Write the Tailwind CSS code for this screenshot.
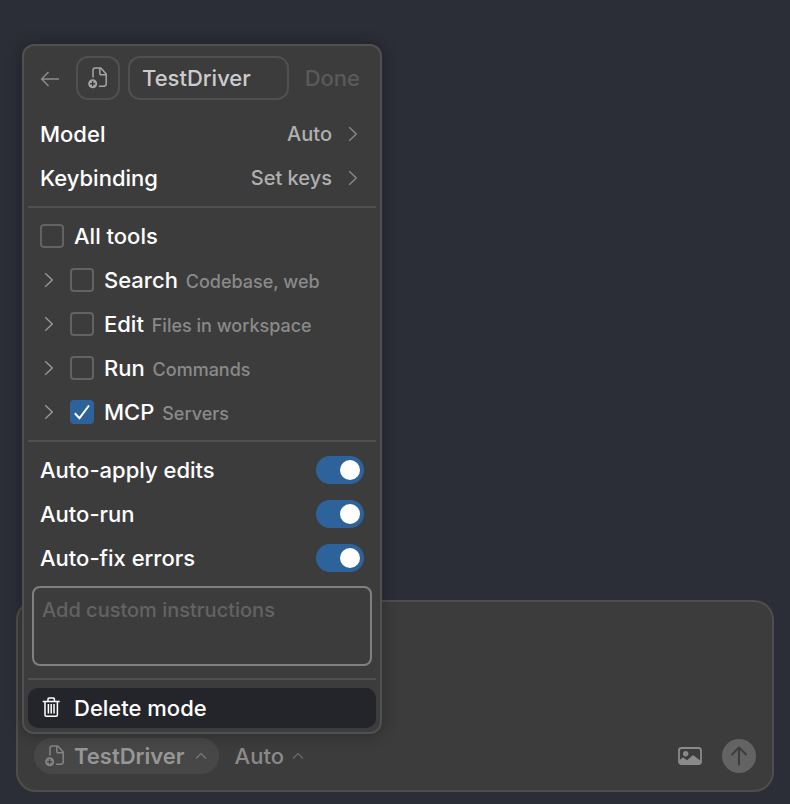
<!DOCTYPE html>
<html lang="en">
<head>
<meta charset="utf-8">
<meta name="viewport" content="width=device-width, initial-scale=1">
<title>Custom mode</title>
<script src="https://cdn.jsdelivr.net/npm/@tailwindcss/browser@4"></script>
</head>
<body class="bg-[#2b2e37] font-[Inter,'Liberation_Sans',sans-serif] text-[22px] leading-7 font-medium text-white">
<svg class="hidden" aria-hidden="true">
  <symbol id="file-plus" viewBox="0 0 22 22">
    <path d="M6 10V3.200A2.200 2.200 0 0 1 8.200 1h5.600l5.400 6v10a2.200 2.200 0 0 1-2.200 2.200h-4.500M12.800 1.200v5.300a1.200 1.200 0 0 0 1.200 1.200h5" fill="none" stroke="currentColor" stroke-width="1.500" stroke-linejoin="round" stroke-linecap="round"/>
    <path fill-rule="evenodd" d="M5.700 12.200a4.500 4.500 0 1 0 0 9a4.500 4.500 0 0 0 0-9ZM5 14.100h1.400v1.900h1.900v1.400h-1.900v1.900h-1.400v-1.900h-1.900v-1.400h1.900Z" fill="currentColor"/>
  </symbol>
  <symbol id="chevron-right" viewBox="0 0 10 16">
    <path d="M1.200 1.300 8.300 8l-7.100 6.700" fill="none" stroke="currentColor" stroke-width="1.300"/>
  </symbol>
  <symbol id="chevron-up" viewBox="0 0 12 8">
    <path d="M1 6.500l5-5 5 5" fill="none" stroke="currentColor" stroke-width="1.200"/>
  </symbol>
  <symbol id="check" viewBox="0 0 24 24">
    <path d="M4.800 13.200l4.700 5L19 5.500" fill="none" stroke="currentColor" stroke-width="2"/>
  </symbol>
</svg>

<main class="flex min-h-screen flex-col justify-end px-4 pb-3">
  <section class="relative flex min-h-48 flex-col justify-end rounded-[20px] border-2 border-[#4e4e4e] bg-[#3c3c3c] p-4" aria-label="Message composer">
    <div class="flex items-center">
      <button type="button" class="flex h-9 items-center rounded-full bg-[#474747] pr-3 pl-2.5 font-semibold text-[#969696]">
        <svg class="size-[22px] text-[#858585]"><use href="#file-plus"/></svg>
        <span class="ml-2">TestDriver</span>
        <svg class="ml-2.5 h-2 w-3 text-[#7a7a7a]"><use href="#chevron-up"/></svg>
      </button>
      <button type="button" class="ml-4 flex h-9 items-center text-[#8a8a8a]">
        <span>Auto</span>
        <svg class="ml-2 h-2 w-3 text-[#6c6c6c]"><use href="#chevron-up"/></svg>
      </button>
      <button type="button" class="ml-auto" aria-label="Add image">
        <svg class="h-5 w-6 text-[#8a8a8a]" viewBox="0 0 24 20">
          <rect x="1" y="2" width="22" height="16" rx="2.500" fill="none" stroke="currentColor" stroke-width="1.800"/>
          <circle cx="7.700" cy="7.700" r="2.700" fill="currentColor"/>
          <path d="M1 14.500l4-3.200 4 3 6-5.300 8 6v1.500a2 2 0 0 1-2 2H3a2 2 0 0 1-2-2Z" fill="currentColor"/>
        </svg>
      </button>
      <button type="button" class="ml-5 grid size-[34px] place-items-center rounded-full bg-[#636363] text-[#3c3c3c]" aria-label="Send">
        <svg class="size-5" viewBox="0 0 20 20" fill="none" stroke="currentColor" stroke-width="2" stroke-linecap="round" stroke-linejoin="round"><path d="M10 18.500V2M3 8.500L10 1.500l7 7"/></svg>
      </button>
    </div>

    <form class="absolute bottom-14 left-1 flex w-[360px] flex-col rounded-xl border-2 border-[#505050] bg-[#3c3c3c] px-1 pt-2.5 pb-1 shadow-[0_0_16px_rgba(0,0,0,0.3)]" aria-label="Edit mode">
      <div class="flex h-11 items-center pr-4 pl-3">
        <button type="button" aria-label="Back" class="text-[#8c8c8c]">
          <svg class="h-[18px] w-5" viewBox="0 0 20 18" fill="none" stroke="currentColor" stroke-width="1.500"><path d="M19 10H2M8.500 3L1.700 10l6.800 7"/></svg>
        </button>
        <button type="button" aria-label="Choose icon" class="ml-4 grid size-11 shrink-0 place-items-center rounded-xl border-2 border-[#505050] text-[#a6a6a6]">
          <svg class="size-[22px]"><use href="#file-plus"/></svg>
        </button>
        <input type="text" value="TestDriver" aria-label="Mode name" class="ml-2 h-11 w-0 grow rounded-xl border-2 border-[#505050] px-3 text-[#cccccc] outline-none">
        <button type="button" class="ml-4 text-[#5a5a5a]">Done</button>
      </div>

      <div class="mt-3">
        <button type="button" class="flex h-11 w-full items-center pr-[18px] pl-3">
          <span>Model</span><span class="ml-auto text-xl text-[#b0b0b0]">Auto</span>
          <svg class="ml-4 h-4 w-2.5 text-[#8c8c8c]"><use href="#chevron-right"/></svg>
        </button>
        <button type="button" class="flex h-11 w-full items-center pr-[18px] pl-3">
          <span>Keybinding</span><span class="ml-auto text-xl text-[#b0b0b0]">Set keys</span>
          <svg class="ml-4 h-4 w-2.5 text-[#8c8c8c]"><use href="#chevron-right"/></svg>
        </button>
      </div>

      <hr class="my-1.5 border-t-2 border-[#505050]">

      <div>
        <div class="flex h-11 items-center pl-3">
          <input id="all" type="checkbox" class="size-6 appearance-none rounded border-2 border-[#636363]">
          <label for="all" class="pl-2.5">All tools</label>
        </div>
        <div class="flex h-11 items-center pl-4">
          <button type="button" aria-label="Expand Search"><svg class="h-4 w-2.5 text-[#9c9c9c]"><use href="#chevron-right"/></svg></button>
          <input id="search" type="checkbox" class="ml-4 size-6 appearance-none rounded border-2 border-[#636363]">
          <label for="search" class="pl-2.5">Search <span class="pl-0.5 text-lg leading-none text-[#8a8a8a]">Codebase, web</span></label>
        </div>
        <div class="flex h-11 items-center pl-4">
          <button type="button" aria-label="Expand Edit"><svg class="h-4 w-2.5 text-[#9c9c9c]"><use href="#chevron-right"/></svg></button>
          <input id="edit" type="checkbox" class="ml-4 size-6 appearance-none rounded border-2 border-[#636363]">
          <label for="edit" class="pl-2.5">Edit <span class="pl-0.5 text-lg leading-none text-[#8a8a8a]">Files in workspace</span></label>
        </div>
        <div class="flex h-11 items-center pl-4">
          <button type="button" aria-label="Expand Run"><svg class="h-4 w-2.5 text-[#9c9c9c]"><use href="#chevron-right"/></svg></button>
          <input id="run" type="checkbox" class="ml-4 size-6 appearance-none rounded border-2 border-[#636363]">
          <label for="run" class="pl-2.5">Run <span class="pl-0.5 text-lg leading-none text-[#8a8a8a]">Commands</span></label>
        </div>
        <div class="flex h-11 items-center pl-4">
          <button type="button" aria-label="Expand MCP"><svg class="h-4 w-2.5 text-[#9c9c9c]"><use href="#chevron-right"/></svg></button>
          <span class="ml-4 grid size-6">
            <input id="mcp" type="checkbox" checked class="peer col-start-1 row-start-1 size-6 appearance-none rounded border-2 border-[#636363] checked:border-[#2e629b] checked:bg-[#2e629b]">
            <svg class="pointer-events-none invisible col-start-1 row-start-1 size-6 peer-checked:visible"><use href="#check"/></svg>
          </span>
          <label for="mcp" class="pl-2.5">MCP <span class="pl-0.5 text-lg leading-none text-[#8a8a8a]">Servers</span></label>
        </div>
      </div>

      <hr class="my-1.5 border-t-2 border-[#505050]">

      <div class="px-3">
        <div class="flex h-11 items-center justify-between">
          <label for="apply">Auto-apply edits</label>
          <input id="apply" type="checkbox" role="switch" checked class="flex h-7 w-12 appearance-none items-center rounded-full bg-[#5a5a5a] px-1 before:size-5 before:rounded-full before:bg-white checked:justify-end checked:bg-[#2e629b]">
        </div>
        <div class="flex h-11 items-center justify-between">
          <label for="autorun">Auto-run</label>
          <input id="autorun" type="checkbox" role="switch" checked class="flex h-7 w-12 appearance-none items-center rounded-full bg-[#5a5a5a] px-1 before:size-5 before:rounded-full before:bg-white checked:justify-end checked:bg-[#2e629b]">
        </div>
        <div class="flex h-11 items-center justify-between">
          <label for="fix">Auto-fix errors</label>
          <input id="fix" type="checkbox" role="switch" checked class="flex h-7 w-12 appearance-none items-center rounded-full bg-[#5a5a5a] px-1 before:size-5 before:rounded-full before:bg-white checked:justify-end checked:bg-[#2e629b]">
        </div>
      </div>

      <textarea aria-label="Custom instructions" placeholder="Add custom instructions" class="mx-1 mt-1.5 block h-20 resize-none rounded-lg border-2 border-[#808080] px-2 py-2 text-xl leading-7 outline-none placeholder:text-[#636363]"></textarea>

      <hr class="mt-3 mb-2 border-t-2 border-[#505050]">

      <button type="button" class="flex h-10 items-center rounded-[10px] bg-[#24252b] pl-3.5">
        <svg class="h-[22px] w-[18px]" viewBox="0 0 18 22" fill="none" stroke="currentColor" stroke-width="1.500"><path d="M.7 4.500h17M6 4.500V2a1 1 0 0 1 1-1h4.400a1 1 0 0 1 1 1v2.500M3 4.500v13.500a1.300 1.300 0 0 0 1.300 1.300h9.800a1.300 1.300 0 0 0 1.300-1.300V4.500M6.400 7v9.500M9.200 7v9.500M12 7v9.500"/></svg>
        <span class="ml-3.5">Delete mode</span>
      </button>
    </form>
  </section>
</main>
</body>
</html>
